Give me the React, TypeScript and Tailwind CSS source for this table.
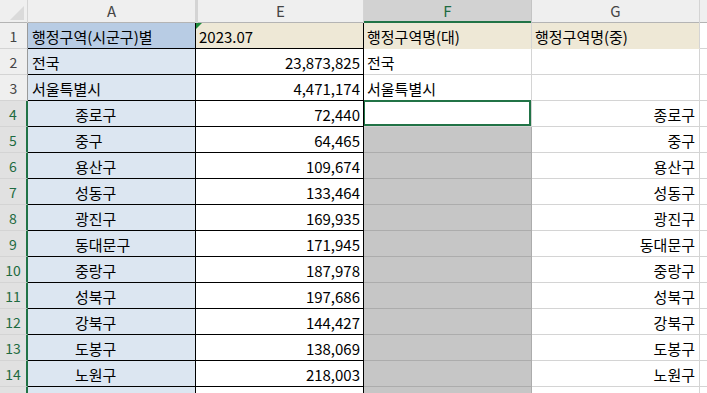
import React from 'react';

type Row = { a: string; e: string; f: string; g: string; indent?: boolean };

const rows: Row[] = [
  { a: '행정구역(시군구)별', e: '2023.07', f: '행정구역명(대)', g: '행정구역명(중)' },
  { a: '전국', e: '23,873,825', f: '전국', g: '' },
  { a: '서울특별시', e: '4,471,174', f: '서울특별시', g: '' },
  { a: '종로구', e: '72,440', f: '', g: '종로구', indent: true },
  { a: '중구', e: '64,465', f: '', g: '중구', indent: true },
  { a: '용산구', e: '109,674', f: '', g: '용산구', indent: true },
  { a: '성동구', e: '133,464', f: '', g: '성동구', indent: true },
  { a: '광진구', e: '169,935', f: '', g: '광진구', indent: true },
  { a: '동대문구', e: '171,945', f: '', g: '동대문구', indent: true },
  { a: '중랑구', e: '187,978', f: '', g: '중랑구', indent: true },
  { a: '성북구', e: '197,686', f: '', g: '성북구', indent: true },
  { a: '강북구', e: '144,427', f: '', g: '강북구', indent: true },
  { a: '도봉구', e: '138,069', f: '', g: '도봉구', indent: true },
  { a: '노원구', e: '218,003', f: '', g: '노원구', indent: true },
  { a: '', e: '', f: '', g: '', indent: true },
];

const font = { fontFamily: '"Noto Sans CJK KR", "Noto Sans", sans-serif' };

export default function App() {
  return (
    <div className="w-[707px] h-[393px] overflow-hidden bg-white text-[15px] text-black" style={font}>
      {/* Column headers */}
      <div className="grid grid-cols-[28px_168px_168px_168px_168px_1fr] h-[23px] bg-[#efefef] border-b border-[#b4b4b4] text-[#444]">
        <div className="relative border-r border-[#d4d4d4]">
          <div className="absolute right-[3px] bottom-[3px] w-0 h-0 border-l-[14px] border-l-transparent border-b-[14px] border-b-[#dadada]" />
        </div>
        <div className="flex items-center justify-center border-r border-[#d4d4d4]">A</div>
        <div className="flex items-center justify-center border-r border-[#d4d4d4] border-l-2 border-l-[#d4d4d4]">E</div>
        <div className="flex items-center justify-center border-r border-[#c4c4c4] bg-[#d2d2d2] text-[#1e6b41] shadow-[inset_0_-2px_0_#217346]">F</div>
        <div className="flex items-center justify-center border-r border-[#d4d4d4]">G</div>
        <div />
      </div>

      {rows.map((r, i) => {
        const n = i + 1;
        const sel = n >= 4;
        const head = n === 1;
        return (
          <div key={n} className="grid grid-cols-[28px_168px_168px_168px_168px_1fr] h-[26px] leading-none">
            {/* row header */}
            <div
              className={`flex items-center justify-center pt-[1px] text-[14px] border-b border-[#d4d4d4] ${
                sel
                  ? 'bg-[#e1e1e1] text-[#1e6b41] border-r-2 border-r-[#217346]'
                  : 'bg-[#efefef] text-[#444] border-r border-r-[#9a9a9a]'
              }`}
            >
              {n < 15 ? n : ''}
            </div>
            {/* A */}
            <div
              className={`flex items-center pt-[1px] border-b border-r border-black whitespace-nowrap ${
                head ? 'bg-[#b8cce4]' : 'bg-[#dce6f1]'
              } ${r.indent ? 'pl-[47px]' : 'pl-[4px]'}`}
            >
              {r.a}
            </div>
            {/* E */}
            <div
              className={`relative flex items-center pt-[1px] border-b border-r border-black whitespace-nowrap ${
                head ? 'bg-[#eee8d6] justify-start pl-[3px]' : 'bg-white justify-end pr-[3px]'
              }`}
            >
              {head && (
                <div className="absolute left-0 top-0 w-0 h-0 border-t-[6px] border-t-[#1e8a3c] border-r-[6px] border-r-transparent" />
              )}
              {r.e}
            </div>
            {/* F */}
            {n === 4 ? (
              <div className="bg-white border-b border-r border-[#d4d4d4]">
                <div className="border-2 border-[#217346] -ml-[1px] -mt-[1px] h-[26px] w-[168px]" />
              </div>
            ) : (
              <div
                className={`flex items-center pt-[1px] pl-[3px] border-b border-r whitespace-nowrap ${
                  sel ? 'bg-[#c6c6c6] border-[#acacac]' : head ? 'bg-[#eee8d6] border-[#d4d4d4] border-b-[#eee8d6]' : 'bg-white border-[#d4d4d4]'
                }`}
              >
                {r.f}
              </div>
            )}
            {/* G */}
            <div
              className={`flex items-center justify-end pt-[1px] pr-[4px] border-b border-r whitespace-nowrap ${
                head ? 'bg-[#eee8d6] border-[#d4d4d4] justify-start pl-[3px] border-b-[#eee8d6]' : 'bg-white border-[#d4d4d4]'
              }`}
            >
              {r.g}
            </div>
            <div className="border-b border-[#d4d4d4] bg-white" />
          </div>
        );
      })}
    </div>
  );
}
